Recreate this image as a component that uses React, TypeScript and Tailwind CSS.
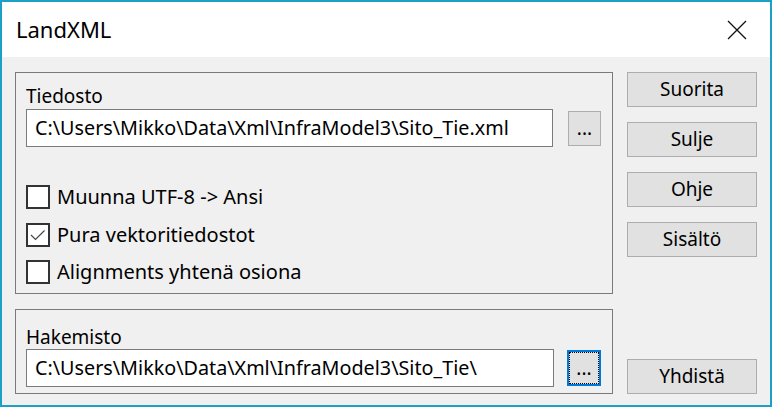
import React from "react";

const font = { fontFamily: '"Noto Sans", "Open Sans", sans-serif' };

function Checkbox({ label, checked }: { label: string; checked?: boolean }) {
  return (
    <div className="flex items-center gap-[7px] h-[24px]">
      <div className="w-[24px] h-[24px] border-2 border-[#333333] bg-white flex items-center justify-center">
        {checked && (
          <svg width="20" height="20" viewBox="0 0 20 20">
            <path d="M3 10 L7.5 14.5 L16.5 5.5" fill="none" stroke="#444" strokeWidth="1.2" />
          </svg>
        )}
      </div>
      <span className="text-[20px] leading-none text-black">{label}</span>
    </div>
  );
}

function Btn({ children }: { children: React.ReactNode }) {
  return (
    <button className="w-[130px] h-[35px] bg-[#e1e1e1] border border-[#adadad] text-[19px] text-black leading-none flex items-center justify-center">
      {children}
    </button>
  );
}

export default function App() {
  return (
    <div
      style={font}
      className="w-[772px] h-[407px] border-2 border-[#1ba1c5] flex flex-col bg-[#f0f0f0] overflow-hidden"
    >
      {/* title bar */}
      <div className="h-[55px] bg-white flex items-center justify-between pl-[14px] pr-[23px]">
        <span className="text-[22px] text-black">LandXML</span>
        <svg width="20" height="20" viewBox="0 0 20 20">
          <path d="M1 1 L19 19 M19 1 L1 19" stroke="#111" strokeWidth="1.3" />
        </svg>
      </div>

      <div className="flex-1 flex gap-[14px] pl-[13px] pt-[15px] pb-[11px]">
        {/* left column */}
        <div className="w-[598px] flex flex-col gap-[15px]">
          <div className="h-[222px] border border-[#7a7a7a] px-[10px] pt-[12px]">
            <div className="text-[19px] leading-[22px] text-black">Tiedosto</div>
            <div className="flex items-center gap-[15px] mt-[2px]">
              <div className="w-[527px] h-[38px] border border-[#7a7a7a] bg-white flex items-center pl-[8px] text-[19.75px] text-black whitespace-nowrap">
                C:\Users\Mikko\Data\Xml\InfraModel3\Sito_Tie.xml
              </div>
              <button className="w-[33px] h-[35px] bg-[#e1e1e1] border border-[#adadad] text-[19px] leading-none flex items-center justify-center">
                ...
              </button>
            </div>
            <div className="flex flex-col gap-[13.5px] mt-[38px]">
              <Checkbox label="Muunna UTF-8 -> Ansi" />
              <Checkbox label="Pura vektoritiedostot" checked />
              <Checkbox label="Alignments yhtenä osiona" />
            </div>
          </div>
          <div className="h-[85px] border border-[#7a7a7a] px-[10px] pt-[16px]">
            <div className="text-[19px] leading-[22px] text-black">Hakemisto</div>
            <div className="flex items-center gap-[13px] mt-[1px]">
              <div className="w-[528px] h-[38px] border border-[#7a7a7a] bg-white flex items-center pl-[8px] text-[19.75px] text-black whitespace-nowrap">
                C:\Users\Mikko\Data\Xml\InfraModel3\Sito_Tie\
              </div>
              <button className="relative w-[34px] h-[36px] bg-[#e1e1e1] border-2 border-[#0078d7] text-[19px] leading-none flex items-center justify-center">
                <span className="absolute inset-0 border border-dotted border-black" />
                ...
              </button>
            </div>
          </div>
        </div>

        {/* right column */}
        <div className="w-[130px] flex flex-col justify-between">
          <div className="flex flex-col gap-[15px]">
            <Btn>Suorita</Btn>
            <Btn>Sulje</Btn>
            <Btn>Ohje</Btn>
            <Btn>Sisältö</Btn>
          </div>
          <Btn>Yhdistä</Btn>
        </div>
      </div>
    </div>
  );
}
